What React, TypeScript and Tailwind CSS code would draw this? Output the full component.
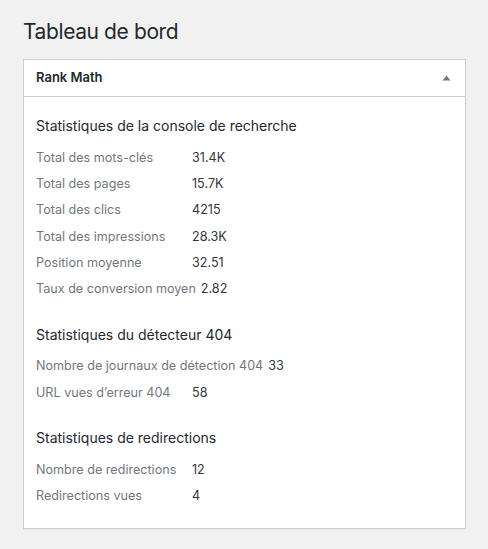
const sections = [
  {
    title: "Statistiques de la console de recherche",
    rows: [
      ["Total des mots-clés", "31.4K"],
      ["Total des pages", "15.7K"],
      ["Total des clics", "4215"],
      ["Total des impressions", "28.3K"],
      ["Position moyenne", "32.51"],
      ["Taux de conversion moyen", "2.82"],
    ],
  },
  {
    title: "Statistiques du détecteur 404",
    rows: [
      ["Nombre de journaux de détection 404", "33"],
      ["URL vues d’erreur 404", "58"],
    ],
  },
  {
    title: "Statistiques de redirections",
    rows: [
      ["Nombre de redirections", "12"],
      ["Redirections vues", "4"],
    ],
  },
];

export default function App() {
  return (
    <div className="min-h-[549px] w-[488px] bg-[#f1f1f1] px-[23px] pt-[18px] font-['Inter',sans-serif] text-[#23282d]">
      <h1 className="text-[21px] leading-[28px] font-normal tracking-[-0.4px]">Tableau de bord</h1>

      <div className="mt-[13px] w-[443px] border border-[#ccd0d4] bg-white shadow-[0_1px_1px_rgba(0,0,0,0.04)]">
        {/* postbox header */}
        <div className="flex h-[37px] items-center justify-between border-b border-[#ccd0d4] px-[12px]">
          <span className="text-[13px] font-semibold text-[#23282d]">Rank Math</span>
          <svg width="9" height="6" viewBox="0 0 9 6" className="mr-[2px]">
            <path d="M4.5 0.5 L8.5 5.5 L0.5 5.5 Z" fill="#72777c" />
          </svg>
        </div>

        <div className="px-[12px] pt-[19px] pb-[18px]">
          {sections.map((s, i) => (
            <div key={s.title} className={i > 0 ? "mt-[22px]" : ""}>
              <h3 className="h-[20px] text-[14px] leading-[20px] font-normal text-[#23282d]">{s.title}</h3>
              <div className="mt-[9px]">
                {s.rows.map(([label, value]) => (
                  <div key={label} className="flex h-[26.3px] items-center text-[12.6px]">
                    <span className="mr-[5px] min-w-[151px] text-[#72777c]">{label}</span>
                    <span className="text-[#32373c]">{value}</span>
                  </div>
                ))}
              </div>
            </div>
          ))}
        </div>
      </div>
    </div>
  );
}
